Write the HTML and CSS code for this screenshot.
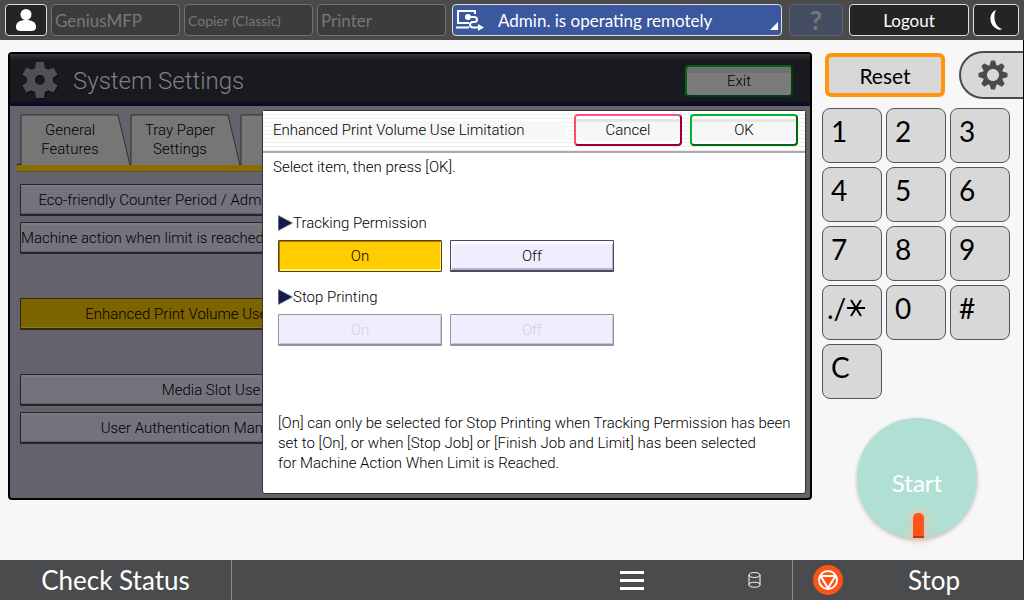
FILE: index.html
```html
<!DOCTYPE html>
<html lang="en">
<head>
<meta charset="UTF-8">
<meta name="viewport" content="width=device-width, initial-scale=1.0">
<title>System Settings</title>
<link rel="stylesheet" href="styles.css">
</head>
<body>
<header class="topbar">
    <button class="top-key user" aria-label="User">
        <svg width="20" height="22" viewBox="0 0 20 22" fill="#fff"><circle cx="10" cy="5.5" r="5.5"/><path d="M0 18C0 13 4 11 10 11s10 2 10 7c0 3-2 4-5 4H5c-3 0-5-1-5-4z"/></svg>
    </button>
    <button class="top-key app" disabled>GeniusMFP</button>
    <button class="top-key app small" disabled>Copier (Classic)</button>
    <button class="top-key app" disabled>Printer</button>
    <button class="top-key message">
        <svg width="28" height="22" viewBox="0 0 28 22" fill="none" stroke="#fff" stroke-width="2"><path d="M13 14H2V2h17v3M0 18.500h13"/><circle cx="12" cy="8" r="3" fill="#fff" stroke="none"/><path d="M13 8h5c4 0 4 5 0 5h-1c-4 0-4 5.500 0 5.500h6"/><path d="M22 15l6 3.500-6 3.500z" fill="#fff" stroke="none"/></svg>
        <span>Admin. is operating remotely</span>
    </button>
    <button class="top-key help" disabled>?</button>
    <button class="top-key logout">Logout</button>
    <button class="top-key sleep" aria-label="Sleep">
        <svg width="14" height="22" viewBox="0 0 14 22"><path d="M7 1C-1 4-1 18 11 21l2-1C5 17 4 7 7 1z" fill="#fff"/></svg>
    </button>
</header>

<main class="main">
    <section class="screen">
        <div class="screen-header">
            <svg class="settings-icon" width="36" height="38" viewBox="-18 -19 36 38">
                <defs>
                    <path id="tooth" d="M-5-11L-4-18H4L5-11z"/>
                    <g id="cog" fill-rule="evenodd">
                        <path d="M0-13A13 13 0 1 1 0 13A13 13 0 1 1 0-13zM0-5A5 5 0 1 0 0 5A5 5 0 1 0 0-5z"/>
                        <use href="#tooth"/><use href="#tooth" transform="rotate(60)"/><use href="#tooth" transform="rotate(120)"/><use href="#tooth" transform="rotate(180)"/><use href="#tooth" transform="rotate(240)"/><use href="#tooth" transform="rotate(300)"/>
                    </g>
                </defs>
                <use href="#cog" x="1" y="1" fill="#08082c"/>
                <use href="#cog" fill="#505050"/>
            </svg>
            <h1>System Settings</h1>
            <button class="key exit">Exit</button>
        </div>
        <div class="tabs">
            <button class="tab">
                <svg class="tab-shape" viewBox="0 0 110 52" preserveAspectRatio="none"><path d="M1 52V1H98L110 52"/></svg>
                <span>General<br>Features</span>
            </button>
            <button class="tab">
                <svg class="tab-shape" viewBox="0 0 110 52" preserveAspectRatio="none"><path d="M1 52V1H98L110 52"/></svg>
                <span>Tray Paper<br>Settings</span>
            </button>
            <button class="tab" aria-label="More settings">
                <svg class="tab-shape" viewBox="0 0 110 52" preserveAspectRatio="none"><path d="M1 52V1H98L110 52"/></svg>
            </button>
        </div>
        <div class="settings">
            <button class="setting">Eco-friendly Counter Period / Administrator Message</button>
            <button class="setting">Machine action when limit is reached: Finish Job and Limit</button>
            <button class="setting selected">Enhanced Print Volume Use Limitation</button>
            <button class="setting spaced">Media Slot Use</button>
            <button class="setting">User Authentication Management</button>
        </div>

        <div class="dialog" role="dialog" aria-labelledby="dialog-title">
            <div class="dialog-header">
                <h2 id="dialog-title">Enhanced Print Volume Use Limitation</h2>
                <button class="key cancel">Cancel</button>
                <button class="key ok">OK</button>
            </div>
            <div class="dialog-body">
                <p class="prompt">Select item, then press [OK].</p>
                <div class="group">
                    <h3><svg width="15" height="16" viewBox="0 0 15 16"><path d="M0 0L15 8L0 16z" fill="#141b4d" stroke="#bbb"/></svg>Tracking Permission</h3>
                    <div class="options">
                        <button class="option on">On</button>
                        <button class="option">Off</button>
                    </div>
                </div>
                <div class="group">
                    <h3><svg width="15" height="16" viewBox="0 0 15 16"><path d="M0 0L15 8L0 16z" fill="#141b4d" stroke="#bbb"/></svg>Stop Printing</h3>
                    <div class="options">
                        <button class="option" disabled>On</button>
                        <button class="option" disabled>Off</button>
                    </div>
                </div>
                <p class="note">[On] can only be selected for Stop Printing when Tracking Permission has been<br>set to [On], or when [Stop Job] or [Finish Job and Limit] has been selected<br>for Machine Action When Limit is Reached.</p>
            </div>
        </div>
    </section>

    <aside class="panel">
        <div class="panel-top">
            <button class="reset">Reset</button>
            <button class="tools" aria-label="User Tools">
                <svg width="30" height="30" viewBox="-15 -15 30 30" fill="#4a4b4c">
                    <defs><path id="tip" d="M-4-8L-2-14.500H2L4-8z"/></defs>
                    <circle r="8" fill="none" stroke="#4a4b4c" stroke-width="4.500"/>
                    <use href="#tip"/><use href="#tip" transform="rotate(45)"/><use href="#tip" transform="rotate(90)"/><use href="#tip" transform="rotate(135)"/><use href="#tip" transform="rotate(180)"/><use href="#tip" transform="rotate(225)"/><use href="#tip" transform="rotate(270)"/><use href="#tip" transform="rotate(315)"/>
                    <circle r="6" fill="#d8d8d8"/>
                </svg>
            </button>
        </div>
        <div class="keypad">
            <button class="num">1</button>
            <button class="num">2</button>
            <button class="num">3</button>
            <button class="num">4</button>
            <button class="num">5</button>
            <button class="num">6</button>
            <button class="num">7</button>
            <button class="num">8</button>
            <button class="num">9</button>
            <button class="num wide" aria-label="./*">./<svg width="20" height="20" viewBox="-10 -10 20 20"><path d="M-9 0H9M-5-8L5 8M5-8L-5 8" stroke="#000" stroke-width="2"/></svg></button>
            <button class="num">0</button>
            <button class="num">#</button>
            <button class="num">C</button>
        </div>
        <button class="start">Start<span class="led"></span></button>
    </aside>
</main>

<footer class="bottombar">
    <button class="bottom-key status">Check Status</button>
    <div class="bottom-middle">
        <button class="bottom-key" aria-label="Menu">
            <svg width="24" height="20" viewBox="0 0 24 20" fill="#fff"><path d="M0 1h24v3H0zM0 9h24v3H0zM0 17h24v3H0z"/></svg>
        </button>
        <button class="bottom-key" aria-label="Storage">
            <svg width="14" height="18" viewBox="0 0 14 18" fill="none" stroke="#fff"><ellipse cx="6.500" cy="4" rx="5.500" ry="2.500"/><path d="M1 4v10c0 3 11 3 11 0V4M1 13.500c0-3 11-3 11 0"/></svg>
        </button>
    </div>
    <button class="bottom-key stop">
        <svg width="30" height="30" viewBox="-15 -15 30 30"><circle r="15" fill="#ff5317"/><g fill="none" stroke="#fff" stroke-width="2"><circle r="9"/><path d="M-7.500-4H7.500L0 8z" stroke-linejoin="round"/></g></svg>
        <span>Stop</span>
    </button>
</footer>
</body>
</html>
```

FILE: styles.css
```css
* {
    box-sizing: border-box;
}

body {
    margin: 0;
    min-height: 100vh;
    display: flex;
    flex-direction: column;
    background-color: #f7f7f7;
    font-family: Lato, sans-serif;
    color: #000;
}

button {
    font: inherit;
    color: inherit;
    padding: 0;
    border: none;
    background: none;
    white-space: nowrap;
    cursor: pointer;
}

h1, h2, h3, p {
    margin: 0;
    font-weight: inherit;
}

svg {
    flex: none;
}

/* Top bar */
.topbar {
    display: flex;
    gap: 4px;
    height: 40px;
    padding: 4px 5px;
    background-color: #4a4a4a;
}

.top-key {
    display: flex;
    align-items: center;
    justify-content: center;
    border: 1px solid #ddd;
    border-radius: 4px;
    background-color: #242424;
    color: #fff;
    font-size: 17px;
}

.user {
    width: 42px;
}

.app {
    flex: 1;
    justify-content: flex-start;
    padding: 0 3px;
    border-color: #737373;
    background-color: #3c3c3c;
    color: #777;
}

.small {
    font-size: 14px;
}

.message {
    position: relative;
    width: 330px;
    margin: 0 3px 0 2px;
    padding-left: 3px;
    justify-content: flex-start;
    gap: 14px;
    background-color: #3b579d;
}

.message::after {
    content: "";
    position: absolute;
    right: 3px;
    bottom: 5px;
    border-left: 8px solid transparent;
    border-bottom: 8px solid #fff;
}

.help {
    width: 54px;
    margin-right: 2px;
    border-color: #5c667c;
    background-color: #444d61;
    color: #777;
    font-size: 26px;
    font-weight: bold;
}

.logout {
    width: 120px;
}

.sleep {
    width: 46px;
}

/* Main area */
.main {
    flex: 1;
    display: flex;
    align-items: flex-start;
    gap: 10px;
    padding: 11px 0 0 8px;
    border-right: 1px solid #000;
}

.screen {
    position: relative;
    flex: 1;
    margin-top: 1px;
    min-width: 0;
    overflow: hidden;
    border: 2px solid #000;
    border-radius: 4px;
    background-color: #64636c;
    font-family: Roboto, sans-serif;
    font-weight: 300;
    font-size: 15px;
    padding-bottom: 54px;
}

.screen-header {
    display: flex;
    align-items: center;
    gap: 15px;
    height: 52px;
    padding: 0 17px 0 12px;
    background: linear-gradient(#35353a, #191920 6px, #191920 46px, #0b0822);
    border-bottom: 1px solid #08082c;
}

.screen-header h1 {
    flex: 1;
    padding-top: 3px;
    color: #808080;
    font-size: 24px;
}

.key {
    width: 108px;
    height: 32px;
    border: 2px solid;
    border-radius: 4px;
    background: linear-gradient(#fff 3px, #e6e6e6 3px, #e6e6e6 6px, #f7f7f7 6px, #f7f7f7 25px, #fff 25px);
}

.exit {
    margin-top: 3px;
    border-color: #006513 #003e0b #003e0b #006513;
    background: linear-gradient(#707070 6px, #7b7b7b 6px);
}

/* Tabs and settings list */
.tabs {
    display: flex;
    height: 65px;
    margin: 0 6px 0 7px;
    padding: 8px 0 0 3px;
    border-bottom: 6px solid #8a6d00;
    box-shadow: inset 0 -1px 0 #2b281c, 0 1px 0 #55534a;
}

.tab {
    position: relative;
    width: 110px;
    height: 51px;
    padding-right: 10px;
    line-height: 19px;
}

.tab span {
    position: relative;
}

.tab-shape {
    position: absolute;
    left: 0;
    top: 0;
    width: 100%;
    height: 100%;
    fill: #767676;
    stroke: #303030;
    stroke-width: 1;
}

.settings {
    display: flex;
    flex-direction: column;
    gap: 6px;
    width: 382px;
    margin: 13px 0 0 10px;
}

.setting {
    height: 32px;
    overflow: hidden;
    border: 1px solid #25252e;
    border-bottom-width: 2px;
    border-radius: 1px;
    background-color: #74737d;
    box-shadow: inset 0 2px 0 #7c7c7c, inset 0 -1px 0 #5c5c63;
}

.selected {
    margin-top: 38px;
    border-color: #332900;
    background-color: #7d6400;
    box-shadow: inset 0 -1px 0 #7d7b34;
}

.spaced {
    margin-top: 38px;
}

/* Dialog */
.dialog {
    position: absolute;
    top: 56px;
    right: 4px;
    bottom: 4px;
    width: 544px;
    border: 1px solid #333;
    border-radius: 3px;
    background-color: #fff;
}

.dialog-header {
    display: flex;
    align-items: center;
    gap: 8px;
    height: 42px;
    padding: 0 7px 2px 10px;
    border-bottom: 2px solid #aaa;
    background: repeating-linear-gradient(#fff 0, #fff 3px, #ececec 3px, #ececec 4px);
}

.dialog-header h2 {
    flex: 1;
    background-color: #f7f7f7;
    font-size: 15px;
}

.cancel {
    border-color: #ff4f87 #99002f #99002f #ff4f60;
}

.ok {
    border-color: #00b52a #006a0c #006a0c #00b52a;
}

.dialog-body {
    padding: 4px 10px 0 15px;
}

.prompt {
    margin-left: -5px;
    line-height: 20px;
}

.group {
    margin-top: 36px;
}

.group + .group {
    margin-top: 15px;
}

.group h3 {
    display: flex;
    align-items: center;
    line-height: 20px;
    font-size: 15px;
    margin-bottom: 7px;
}

.options {
    display: flex;
    gap: 8px;
}

.option {
    width: 164px;
    height: 32px;
    border: 1px solid #4b4766;
    border-bottom-width: 2px;
    border-radius: 1px;
    background-color: #efeeff;
    box-shadow: inset 1px 3px 0 #fff, inset -1px -2px 0 #b5b4c2;
}

.on {
    background-color: #ffcc00;
    border: 1px solid #5c4200;
    box-shadow: inset 1px 1px 0 #a87b00, inset -1px -2px 0 #fff56b;
}

.option:disabled {
    border-color: #9392a0;
    color: #d2d2dc;
    box-shadow: inset 1px 2px 0 #f0f0f0, inset -1px -1px 0 #c8c7d6;
}

.note {
    margin-top: 67px;
    line-height: 20px;
    white-space: nowrap;
}

/* Right hand control panel */
.panel {
    width: 201px;
}

.panel-top {
    display: flex;
    align-items: center;
    justify-content: space-between;
    padding-left: 3px;
}

.reset {
    width: 120px;
    height: 44px;
    border: 4px solid #ff950d;
    border-radius: 6px;
    background-color: #d8d8d8;
    font-size: 21px;
}

.tools {
    display: flex;
    align-items: center;
    width: 64px;
    height: 48px;
    padding-left: 17px;
    border: 2px solid #4a4b4c;
    border-right: none;
    border-radius: 24px 0 0 24px;
    background-color: #d8d8d8;
}

.keypad {
    display: grid;
    grid-template-columns: repeat(3, 60px);
    grid-auto-rows: 55px;
    gap: 4px;
    margin-top: 9px;
}

.num {
    display: flex;
    align-items: center;
    padding: 0 0 10px 8px;
    border: 1px solid #555;
    border-radius: 8px;
    background-color: #d8d8d8;
    font-size: 28px;
}

.wide {
    padding-left: 4px;
}

.start {
    position: relative;
    display: block;
    width: 120px;
    height: 120px;
    margin: 19px 0 0 35px;
    padding-top: 8px;
    border-radius: 50%;
    background-color: #b0e0d4;
    box-shadow: 0 2px 4px rgba(0, 0, 0, 0.25);
    color: #fff;
    font-size: 24px;
}

.led {
    position: absolute;
    left: 56px;
    bottom: 0;
    width: 11px;
    height: 25px;
    border-radius: 5px 5px 0 0;
    border-bottom: 2px solid #b33c16;
    background-color: #ff5317;
    box-shadow: 0 0 10px 3px rgba(255, 190, 160, 0.6);
}

/* Bottom bar */
.bottombar {
    display: flex;
    height: 40px;
    background-color: #4a4b4c;
    color: #fff;
    font-size: 26px;
}

.bottom-key {
    display: flex;
    align-items: center;
    justify-content: center;
}

.status {
    width: 232px;
    border-right: 1px solid #888;
}

.bottom-middle {
    flex: 1;
    display: flex;
    justify-content: flex-end;
    gap: 104px;
    padding-right: 30px;
}

.stop {
    width: 232px;
    justify-content: flex-start;
    gap: 65px;
    padding-left: 20px;
    border-left: 1px solid #888;
}
```
